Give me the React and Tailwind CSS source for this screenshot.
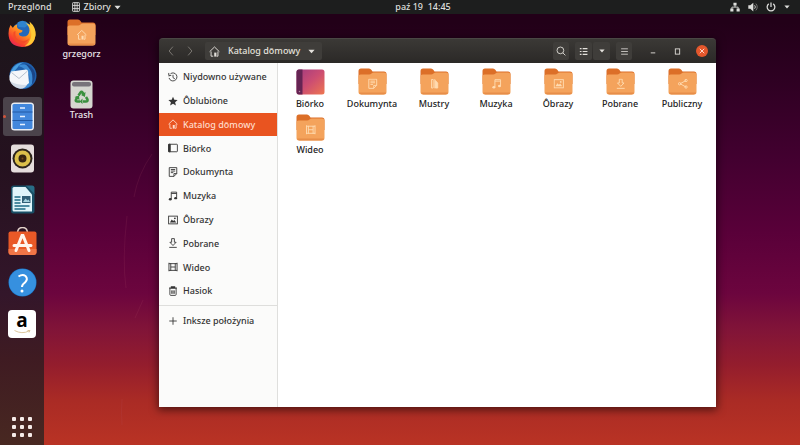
import React from "react";

/* Small monochrome glyphs, all drawn on a 16 x 16 grid */
const glyphs = {
  recent: (
    <>
      <path d="M4 2.8A6.4 6.4 0 1 1 1.7 9.5" />
      <path d="M1.2 1.5v4h4M8 4.5V9l3 2" />
      <path d="M1.6 7.2v.6" />
    </>
  ),
  star: <path d="M8 1l2.1 4.9 5.3.4-4 3.5 1.2 5.2L8 12.2 3.4 15l1.2-5.2-4-3.5 5.3-.4z" fill="currentColor" stroke="none" />,
  home: (
    <>
      <path d="M.9 8.3 8 1.4l7.1 6.9" />
      <path d="M3 8v6.8h3.2M13 8v6.8h-1.8" />
      <path d="M7.6 15.4V9.6h3.2v5.8z" fill="currentColor" stroke="none" />
    </>
  ),
  desktop: (
    <>
      <rect x="1" y="2" width="14" height="12" rx="1" />
      <path d="M1 2h2.6v12H1z" fill="currentColor" />
    </>
  ),
  documents: (
    <>
      <path d="M2 1h12v9.5L9.5 15H2z" />
      <path d="M14 10.5H9.5V15M4.5 4h7M4.5 6.5h7M4.5 9h4" />
    </>
  ),
  music: (
    <>
      <path d="M5.2 13V1.8h8.6V11M5.2 4h8.6" />
      <ellipse cx="3.6" cy="13.2" rx="2.3" ry="1.9" fill="currentColor" stroke="none" />
      <ellipse cx="12.2" cy="11.4" rx="2.3" ry="1.9" fill="currentColor" stroke="none" />
    </>
  ),
  pictures: (
    <>
      <rect x="1" y="1.8" width="14" height="12.4" />
      <path d="M3 11.8l3-4.6 2.2 2.4 2-1.8 3 4z" fill="currentColor" stroke="none" />
      <circle cx="11" cy="5.2" r="1.4" fill="currentColor" stroke="none" />
    </>
  ),
  downloads: (
    <>
      <path d="M5.8 1h4.4v5.8H13L8 12 3 6.8h2.8z" />
      <path d="M2 15h12" />
    </>
  ),
  videos: <path d="M1.5 1.2v13.6M14.5 1.2v13.6M4.4 2v12M11.6 2v12M1.5 2.6h13M4.4 8h7.2M1.5 13.4h13" />,
  trash: (
    <>
      <path d="M1.8 3.4h12.4M5.5 3V1.2h5V3" strokeWidth="2" />
      <path d="M3 4v9.6c0 .8.5 1.4 1.4 1.4h7.2c.9 0 1.4-.6 1.4-1.4V4M6 7v5.5M8 7v5.5M10 7v5.5" />
    </>
  ),
  plus: <path d="M8 2v12M2 8h12" />,
  templates: (
    <>
      <path d="M3 1.5h2.6v13H3z" />
      <path d="M8 1v14M9 3l3.5 4v7.5H9z" fill="currentColor" />
    </>
  ),
  share: (
    <>
      <path d="M13 3 4 8l9 5" />
      <circle cx="13" cy="3" r="1.8" />
      <circle cx="3.2" cy="8" r="1.8" />
      <circle cx="13" cy="13" r="1.8" />
    </>
  ),
  search: (
    <>
      <circle cx="7" cy="7" r="5.4" />
      <path d="m11 11 4 4" />
    </>
  ),
  list: <path d="M1.5 3h3M1.5 8h3M1.5 13h3M6.5 3H15M6.5 8H15M6.5 13H15" strokeWidth="2.2" />,
  menu: <path d="M2 3.2h12M2 8h12M2 12.8h12" />,
  back: <path d="M11 1 5 8l6 7" />,
  forward: <path d="m5 1 6 7-6 7" />,
  caret: <path d="M1 4h14l-7 8z" fill="currentColor" stroke="none" />,
  minimize: <path d="M2 13h12" strokeWidth="2.4" />,
  maximize: <rect x="3" y="2" width="10" height="12" strokeWidth="2" />,
  close: <path d="m2 2 12 12M14 2 2 14" strokeWidth="2.6" />,
  apps: (
    <>
      <rect x="2.5" y="1" width="11" height="14" rx="1" />
      <path d="M6.2 1v14M9.8 1v14M3 5.5h10M3 10.5h10" />
    </>
  ),
  network: (
    <>
      <path d="M5.5 1h5v4.6h-5zM.5 10.5h5V15h-5zM10.5 10.5h5V15h-5z" fill="currentColor" stroke="none" />
      <path d="M8 5v3.2M3 11V8.2h10V11" />
    </>
  ),
  volume: (
    <>
      <path d="M.5 5.2h3.2L8.5 1v14l-4.8-4.2H.5z" fill="currentColor" stroke="none" />
      <path d="M10.5 5.2a4 4 0 0 1 0 5.6" />
      <path d="M12.5 2.6a7.6 7.6 0 0 1 0 10.8" opacity=".5" />
    </>
  ),
  power: <path d="M8 .8V8M4.4 3A6.2 6.2 0 1 0 11.6 3" strokeWidth="2" />,
};

function Glyph({ name, className = "size-[10px]" }) {
  return (
    <svg viewBox="0 0 16 16" className={`shrink-0 ${className}`} fill="none" stroke="currentColor" strokeWidth="1.4" aria-hidden="true">
      {glyphs[name]}
    </svg>
  );
}

function Folder({ glyph }) {
  return (
    <svg viewBox="0 0 58 54" className="h-[27px] w-[29px] shrink-0" aria-hidden="true">
      <path d="M1 6q0-5 5-5h16q3 0 5 3l2 3h23q5 0 5 5v20H1z" fill="#dc6f28" />
      <path d="M1 16q0-3 4-3h17q3 0 5-2t5-2h20q5 0 5 5v34q0 5-5 5H6q-5 0-5-5z" fill="#f4a35c" />
      <path d="M2 49q1 4 5 4h44q5 0 5-4z" fill="#e78e49" />
      <svg x="19" y="21" width="21" height="21" viewBox="0 0 16 16" fill="none" stroke="#ffdcb2" strokeWidth="1.4" color="#ffdcb2">
        {glyphs[glyph]}
      </svg>
    </svg>
  );
}

function DesktopThumb() {
  return (
    <svg viewBox="0 0 58 54" className="h-[27px] w-[29px] shrink-0" aria-hidden="true">
      <defs>
        <linearGradient id="thumb" x1="0" y1="0" x2="1" y2="1">
          <stop offset="0" stopColor="#a23b80" />
          <stop offset=".5" stopColor="#cc4d72" />
          <stop offset="1" stopColor="#ee7650" />
        </linearGradient>
      </defs>
      <rect x="1" y="3" width="56" height="50" rx="5" fill="url(#thumb)" />
      <path d="M13 3H6Q1 3 1 8v40q0 5 5 5h7z" fill="#652453" />
      <circle cx="7" cy="47" r="1.5" fill="#b5819f" />
    </svg>
  );
}

const dockIcons = {
  Firefox: (
    <>
      <defs>
        <linearGradient id="fox" x1=".9" y1="0" x2=".1" y2="1">
          <stop offset="0" stopColor="#ffe34a" />
          <stop offset=".4" stopColor="#ff9a1f" />
          <stop offset=".75" stopColor="#f9402f" />
          <stop offset="1" stopColor="#dd1b6a" />
        </linearGradient>
      </defs>
      <circle cx="28" cy="26" r="20" fill="#2368ba" />
      <path d="M19 7q12-8 23 3l-8 7-13-1z" fill="#2e83ce" />
      <path d="M5 12l5 6q2-6 9-7-3 5 2 9l8 3q0 4-7 5-1 6 7 7 13 1 14-12 0-9-8-15 19 4 20 23Q53 56 28 56 1 54 1 29q0-10 4-17z" fill="url(#fox)" />
      <path d="M43 5q14 12 12 28Q52 53 33 55q17-13 13-32-1-9-3-18z" fill="#ffca35" />
      <path d="M15 24q-4 18 14 20 11 0 15-8-7 15-21 13Q8 46 11 26z" fill="#f34c27" />
    </>
  ),
  Thunderbird: (
    <>
      <circle cx="30" cy="29" r="27" fill="#1f60ad" />
      <path d="M6 20Q14 3 32 3q-9 3-12 9L7 27z" fill="#4aa0e0" />
      <path d="M20 10Q38 2 50 17q6 14-2 28-4 8-16 10 14-12 10-27-5-14-22-18z" fill="#3b8bd4" />
      <path d="M33 5q17 4 21 20 1 12-6 21 3-20-4-29-4-7-11-12z" fill="#1a4587" />
      <path d="M6 21 36 17q3 0 4 3l2 24q-7 8-20 8-14-2-19-14-1-9 3-17z" fill="#f5f7fa" />
      <path d="m7 23 15 12 17-15" fill="none" stroke="#b6c1ce" strokeWidth="2" />
      <path d="M4 40q10 8 34 8-5 9-16 7Q9 52 4 40z" fill="#d2dce8" />
    </>
  ),
  Files: (
    <>
      <rect x="6" y="1" width="46" height="56" rx="7" fill="#e9edf3" />
      <rect x="9" y="4" width="40" height="50" rx="3" fill="#4287dc" />
      <path d="M9 20h40M9 37h40" stroke="#225aa6" strokeWidth="2" />
      <path d="M24 12h10M24 29h10M24 45h10" stroke="#e7f1ff" strokeWidth="3" />
    </>
  ),
  Rhythmbox: (
    <>
      <rect x="6" y="1" width="46" height="56" rx="6" fill="#e5dddc" />
      <circle cx="29" cy="29" r="20" fill="#2c241c" />
      <circle cx="29" cy="29" r="12" fill="none" stroke="#dcc04a" strokeWidth="8" />
      <circle cx="29" cy="29" r="7" fill="#382510" />
      <circle cx="29" cy="29" r="2" fill="#7a4d1a" />
    </>
  ),
  "LibreOffice Writer": (
    <>
      <path d="M11 1h26l16 16v35q0 5-5 5H11q-5 0-5-5V6q0-5 5-5z" fill="#194f66" />
      <path d="M12 4h23l13 15v34H12q-3 0-3-3V7q0-3 3-3z" fill="#e0f4fa" />
      <path d="M36 1h12q5 0 5 5v12z" fill="#286d86" />
      <path d="M13 24h12M13 30h12M13 36h12M13 42h30M13 48h22" stroke="#1d6a85" strokeWidth="3" />
      <rect x="28" y="22" width="17" height="14" fill="#315f76" />
      <path d="M30 34l5-7 4 4 2-2 3 5z" fill="#a5d1dd" />
    </>
  ),
  "Ubuntu Software": (
    <>
      <path d="M19 11q1-10 10-10t10 10" fill="none" stroke="#e3d2ca" strokeWidth="3" />
      <path d="M1 13q0-4 4-4h48q4 0 4 4v37q0 6-6 6H7q-6 0-6-6z" fill="#e95927" />
      <path d="M1 44h56v6q0 6-6 6H7q-6 0-6-6z" fill="#ef7547" />
      <path d="M16 47 28 17h2l12 30M12 37h34" fill="none" stroke="#fff5ed" strokeWidth="6" strokeLinecap="round" />
    </>
  ),
  Help: (
    <>
      <circle cx="29" cy="29" r="28" fill="#1875c8" />
      <circle cx="29" cy="29" r="27" fill="#3690df" />
      <path d="M21 17q8-5 14-1 6 6-1 13-6 4-6 9" fill="none" stroke="#fff" strokeWidth="4" />
      <circle cx="28" cy="46" r="3" fill="#fff" />
    </>
  ),
};

function DockIcon({ name }) {
  if (name === "Amazon") {
    return (
      <span className="flex size-7 flex-col items-center rounded bg-white font-['Open_Sans',sans-serif] text-[19px] leading-[20px] font-bold text-black">
        a
        <svg viewBox="0 0 34 8" className="h-[4px] w-[17px]" fill="none" stroke="#d3b884" strokeWidth="1.6" aria-hidden="true">
          <path d="M1 1q15 8 29 1M27 1h5l-2 4" />
        </svg>
      </span>
    );
  }
  return (
    <svg viewBox="0 0 58 58" className="size-[29px]" aria-hidden="true">
      {dockIcons[name]}
    </svg>
  );
}

const dockApps = ["Firefox", "Thunderbird", "Files", "Rhythmbox", "LibreOffice Writer", "Ubuntu Software", "Help", "Amazon"];

const places = [
  ["recent", "Niydowno używane"],
  ["star", "Ôblubiōne"],
  ["home", "Katalog dōmowy"],
  ["desktop", "Biōrko"],
  ["documents", "Dokumynta"],
  ["music", "Muzyka"],
  ["pictures", "Ôbrazy"],
  ["downloads", "Pobrane"],
  ["videos", "Wideo"],
  ["trash", "Hasiok"],
];

const folders = [
  ["desktop", "Biōrko"],
  ["documents", "Dokumynta"],
  ["templates", "Mustry"],
  ["music", "Muzyka"],
  ["pictures", "Ôbrazy"],
  ["downloads", "Pobrane"],
  ["share", "Publiczny"],
  ["videos", "Wideo"],
];

function TopBar() {
  return (
    <header className="grid h-[14px] shrink-0 grid-cols-[1fr_auto_1fr] items-center bg-[#1d1e1e] pr-[10px] pl-2 leading-[12px] text-[#dededc]">
      <div className="flex items-center gap-[19px]">
        <button>Przeglōnd</button>
        <button className="flex items-center gap-[3px]">
          <Glyph name="apps" />
          Zbiory
          <Glyph name="caret" className="size-[7px]" />
        </button>
      </div>
      <button className="ml-12 whitespace-pre">paź 19  14:45</button>
      <button className="flex items-center gap-2 justify-self-end" aria-label="System">
        <Glyph name="network" />
        <Glyph name="volume" />
        <Glyph name="power" />
        <Glyph name="caret" className="size-[6px]" />
      </button>
    </header>
  );
}

function Dock() {
  return (
    <nav className="flex w-11 shrink-0 flex-col items-center justify-between bg-[linear-gradient(#1c161b,#25111f_35%,#33162a_65%,#3f1b22_80%,#482821)] pb-2">
      <ul className="flex h-[330px] w-full flex-col justify-between">
        {dockApps.map((name) => (
          <li key={name} className="relative flex justify-center">
            {name === "Files" && <span className="absolute top-[18px] left-[3px] z-10 size-[3px] rounded-full bg-[#d4543a]" />}
            <button
              aria-label={name}
              className={`flex size-[39px] items-center justify-center rounded-[3px] ${name === "Files" ? "bg-[#4b434b]" : ""}`}
            >
              <DockIcon name={name} />
            </button>
          </li>
        ))}
      </ul>
      <button aria-label="Show applications" className="grid grid-cols-3 gap-1">
        {[0, 1, 2, 3, 4, 5, 6, 7, 8].map((i) => (
          <span key={i} className="size-[4px] rounded-[1px] bg-[#f5ebe8]" />
        ))}
      </button>
    </nav>
  );
}

function DesktopIcons() {
  return (
    <div className="flex w-[75px] shrink-0 flex-col items-center gap-5 pt-[5px] leading-[12px] text-[#ece6ea]">
      <button className="flex flex-col items-center gap-[2px]">
        <Folder glyph="home" />
        grzegorz
      </button>
      <button className="flex flex-col items-center">
        <svg viewBox="0 0 46 58" className="h-[29px] w-[23px]" aria-hidden="true">
          <rect x="1" y="1" width="44" height="56" rx="6" fill="#d5d6d0" />
          <rect x="4" y="4" width="38" height="9" rx="4" fill="#77737a" />
          <g fill="none" stroke="#39903f" strokeWidth="5">
            <path d="m17 31 4-6q2-3 4 0l3 5M32 34l3 5q1 4-3 4h-6M20 43h-5q-5 0-3-4l3-5" />
          </g>
          <path d="m31 24-1 10-8-4zM25 37v11l-6-5zM9 34l9-3 1 9z" fill="#39903f" />
        </svg>
        Trash
      </button>
    </div>
  );
}

const headerButton = "flex h-[18px] items-center justify-center rounded-[2px] bg-[#3f3d3a]";

function TitleBar() {
  return (
    <div className="flex h-[25px] shrink-0 items-center justify-between rounded-t-[4px] border-t border-[#4a4744] bg-linear-to-b from-[#3b3936] to-[#2b2927] pr-2 pl-2 text-[#e4e1dc]">
      <div className="flex items-center">
        <button aria-label="Back" className="flex w-[19px] justify-center pr-3 text-[#85817c]">
          <Glyph name="back" />
        </button>
        <button aria-label="Forward" className="flex w-[19px] justify-center pr-3 text-[#85817c]">
          <Glyph name="forward" />
        </button>
        <button className={`${headerButton} gap-2 pr-[7px] pl-1 font-medium`}>
          <Glyph name="home" className="size-[11px]" />
          Katalog dōmowy
          <Glyph name="caret" className="size-[7px]" />
        </button>
      </div>
      <div className="flex items-center">
        <button aria-label="Search" className={`${headerButton} mr-[6px] w-4`}>
          <Glyph name="search" />
        </button>
        <button aria-label="List view" className={`${headerButton} w-[17px]`}>
          <Glyph name="list" className="size-[9px]" />
        </button>
        <button aria-label="View options" className={`${headerButton} mr-[6px] ml-px w-[17px]`}>
          <Glyph name="caret" className="size-[6px]" />
        </button>
        <button aria-label="Menu" className={`${headerButton} mr-2 w-4`}>
          <Glyph name="menu" className="size-[9px]" />
        </button>
        <button aria-label="Minimize" className="flex w-[25px] justify-center">
          <Glyph name="minimize" className="size-[6px]" />
        </button>
        <button aria-label="Maximize" className="flex w-[25px] justify-center">
          <Glyph name="maximize" className="size-[7px]" />
        </button>
        <button aria-label="Close" className="ml-[6px] flex size-3 items-center justify-center rounded-full bg-[#e4572c] text-[#ffd9cb]">
          <Glyph name="close" className="size-[6px]" />
        </button>
      </div>
    </div>
  );
}

function Sidebar() {
  return (
    <nav className="w-[119px] shrink-0 border-r border-[#dfdfdd] bg-[#fbfbfa] pt-[2px] text-[#333]">
      <ul className="flex h-[238px] flex-col">
        {places.map(([icon, label]) => (
          <li key={label} className="flex flex-1">
            <button className={`flex w-full items-center gap-[5px] pl-[9px] ${icon === "home" ? "bg-[#e95420] text-[#ffdccb]" : ""}`}>
              <Glyph name={icon} />
              {label}
            </button>
          </li>
        ))}
      </ul>
      <div className="mt-[2px] border-t border-[#dededc] pt-[3px]">
        <button className="flex h-6 w-full items-center gap-[5px] pl-[9px]">
          <Glyph name="plus" />
          Inksze położynia
        </button>
      </div>
    </nav>
  );
}

function FileWindow() {
  return (
    <section className="mt-6 mr-[84px] mb-[38px] ml-10 flex min-w-0 flex-1 flex-col rounded-t-[4px] shadow-[0_2px_8px_1px_rgba(0,0,0,0.55)]">
      <TitleBar />
      <div className="flex min-h-0 flex-1 bg-white">
        <Sidebar />
        <main className="grid min-w-0 flex-1 grid-cols-7 content-start gap-y-1 pt-[5px] pr-[3px] pl-px text-[#222]">
          {folders.map(([icon, label]) => (
            <button key={label} className="flex flex-col items-center gap-[3px] leading-[12px]">
              {icon === "desktop" ? <DesktopThumb /> : <Folder glyph={icon} />}
              {label}
            </button>
          ))}
        </main>
      </div>
    </section>
  );
}

export default function App() {
  return (
    <div className="relative flex h-screen flex-col overflow-hidden bg-[linear-gradient(#220018_5%,#2e0022_18%,#430030_36%,#590039_52%,#6c053e_66%,#811438_74%,#941d2d_82%,#aa2b25_90%,#b93324)] font-['Noto_Sans','Open_Sans',sans-serif] text-[9px] font-medium">
      <svg viewBox="0 0 160 445" className="pointer-events-none absolute top-0 left-0 h-full w-40" fill="none" stroke="#b65a70" strokeOpacity=".2" strokeWidth=".7" aria-hidden="true">
        <path d="M152 154q-14 20-18 43M127 216q-5 44-1 72M143 300l-8 18M122 399q-1 12 0 26" />
      </svg>
      <TopBar />
      <div className="relative flex min-h-0 flex-1">
        <Dock />
        <DesktopIcons />
        <FileWindow />
      </div>
    </div>
  );
}
